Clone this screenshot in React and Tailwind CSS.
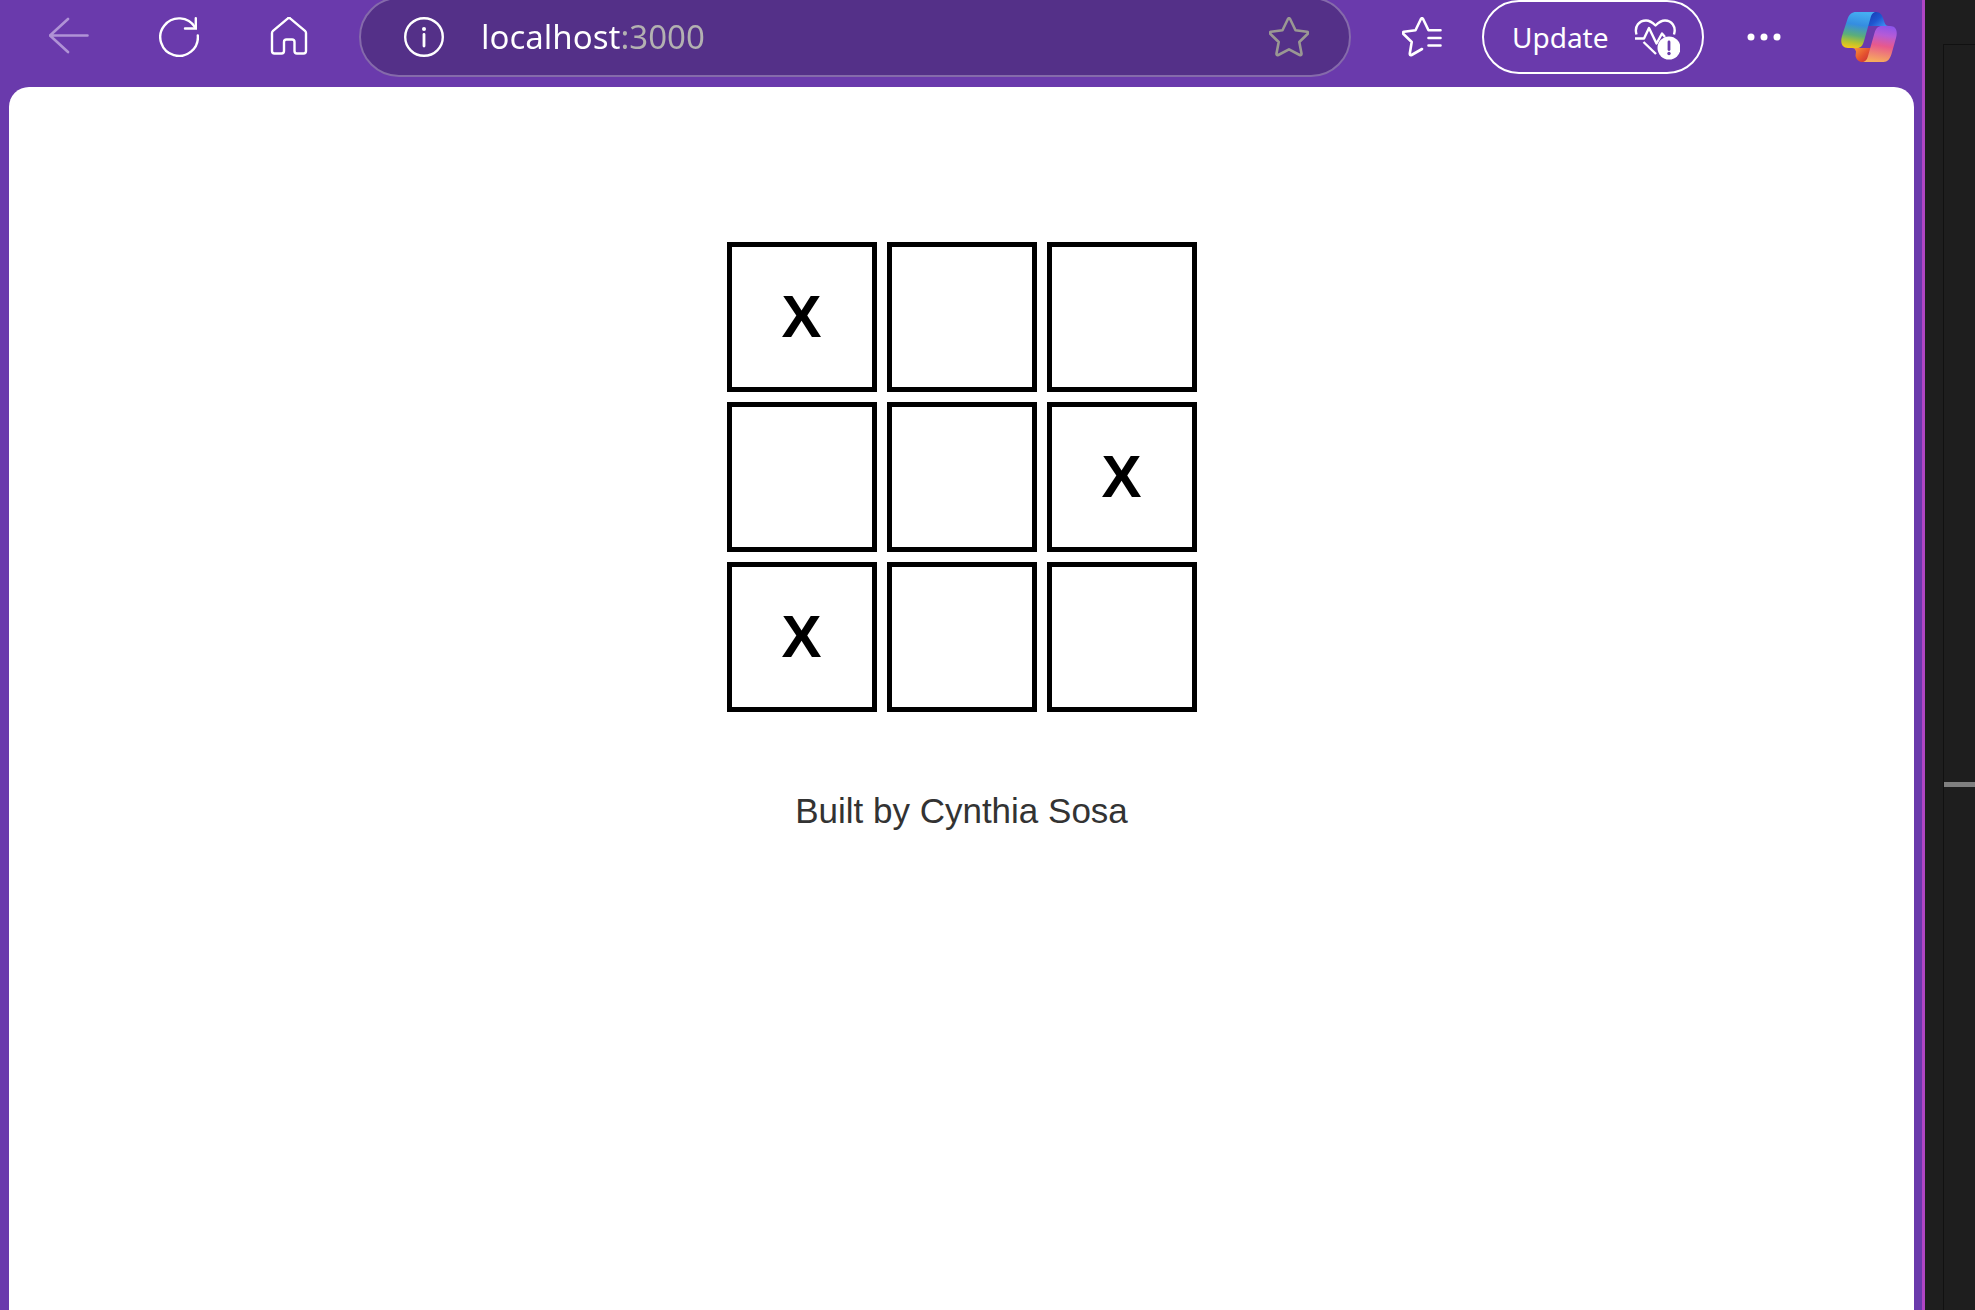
import React, { useState } from "react";

function BackIcon() {
  return (
    <svg width="40" height="40" viewBox="0 0 40 40" fill="none" stroke="currentColor" strokeWidth="2.6" strokeLinecap="round" strokeLinejoin="round">
      <path d="M19 2 1 18.500 19 35M1 18.500H38.500" />
    </svg>
  );
}

function RefreshIcon() {
  return (
    <svg width="40" height="40" viewBox="0 0 40 40" fill="none" stroke="currentColor" strokeWidth="2.4" strokeLinecap="round">
      <path d="M38.800 18.500A18.800 18.800 0 1 1 36.200 10.500" />
      <path d="M36.800 1.200V11.500H26" strokeLinejoin="miter" />
    </svg>
  );
}

function HomeIcon() {
  return (
    <svg width="40" height="40" viewBox="0 0 40 40" fill="none" stroke="currentColor" strokeWidth="2.4" strokeLinejoin="round">
      <path d="M18.6 1.6a2 2 0 0 1 2.8 0L36 13.8q1 .9 1 2.2V34a2.5 2.5 0 0 1-2.5 2.5H28a2.5 2.5 0 0 1-2.5-2.5V25a2.5 2.5 0 0 0-2.500-2.500H17.500A2.500 2.500 0 0 0 15 25v9a2.500 2.500 0 0 1-2.500 2.500H5.500A2.500 2.500 0 0 1 3 34V16q0-1.300 1-2.200Z" />
    </svg>
  );
}

function InfoIcon() {
  return (
    <svg width="40" height="40" viewBox="0 0 40 40" fill="none" stroke="currentColor" strokeWidth="2.4">
      <circle cx="20" cy="20" r="18.800" />
      <path d="M20 17.500V29" strokeWidth="2.800" strokeLinecap="round" />
      <circle cx="20" cy="12" r="2" fill="currentColor" stroke="none" />
    </svg>
  );
}

function StarIcon() {
  return (
    <svg width="40" height="40" viewBox="0 0 40 40" fill="none" stroke="currentColor" strokeWidth="2.600" strokeLinejoin="round">
      <path d="M18.800 2.200q1.200-2 2.400 0L26.500 13.200 38 14.800q2 .500.800 2L30.300 25l2.200 11.500q.2 2.200-1.800 1.500L20 32.300 9.300 38q-2 .7-1.800-1.500L9.700 25 1.200 16.800q-1.200-1.500.8-2L13.500 13.200Z" />
    </svg>
  );
}

function FavoritesIcon() {
  return (
    <svg width="40" height="40" viewBox="0 0 40 40" fill="none" stroke="currentColor" strokeWidth="2.600" strokeLinejoin="round" strokeLinecap="round">
      <path d="M38.500 13.300H26.500L21.200 2.200q-1.200-2-2.400 0L13.500 13.200 2 14.800q-2 .5-.8 2L9.700 25 7.800 36.500q-.2 2.200 1.800 1.500L20 32" />
      <path d="M26.500 21H38.500M26.500 28.500H38.500" />
    </svg>
  );
}

function HeartAlertIcon() {
  return (
    <svg width="46" height="46" viewBox="-1 -4 46 46" fill="none" stroke="currentColor" strokeWidth="2.400" strokeLinejoin="round">
      <path d="M1.500 16.500C-1 8 4.500 2.500 11 2.500c4 0 6.500 2 9.500 5C23.500 4.500 26 2.500 30 2.500c6.500 0 11.500 6 9 14" />
      <path d="M0 20.500h9L14 10l7.500 15.500 5.500-10 3 3.500" />
      <path d="M8.500 24 21 36" />
      <circle cx="34" cy="30" r="11.500" fill="currentColor" stroke="none" />
      <path d="M34 24v7.500" stroke="#6a3aac" strokeWidth="2.800" strokeLinecap="round" />
      <circle cx="34" cy="35.500" r="1.700" fill="#6a3aac" stroke="none" />
    </svg>
  );
}

function DotsIcon() {
  return (
    <svg width="34" height="8" viewBox="0 0 34 8" fill="currentColor">
      <circle cx="4" cy="4" r="3.500" />
      <circle cx="17" cy="4" r="3.500" />
      <circle cx="30" cy="4" r="3.500" />
    </svg>
  );
}

function CopilotIcon() {
  return (
    <svg width="56" height="52" viewBox="0 0 56 52">
      <defs>
        <linearGradient id="cpLeft" gradientUnits="userSpaceOnUse" x1="18" y1="1" x2="12" y2="37">
          <stop offset="0" stopColor="#45aef2" />
          <stop offset="0.350" stopColor="#358de0" />
          <stop offset="0.650" stopColor="#5bae7a" />
          <stop offset="0.850" stopColor="#b5c32f" />
          <stop offset="1" stopColor="#f2c51b" />
        </linearGradient>
        <linearGradient id="cpTop" gradientUnits="userSpaceOnUse" x1="30" y1="2" x2="42" y2="16">
          <stop offset="0" stopColor="#1a3fb8" />
          <stop offset="0.500" stopColor="#1e57d0" />
          <stop offset="1" stopColor="#3c8cf0" />
        </linearGradient>
        <linearGradient id="cpRight" gradientUnits="userSpaceOnUse" x1="43" y1="15" x2="37" y2="51">
          <stop offset="0" stopColor="#8f55ea" />
          <stop offset="0.250" stopColor="#b65bd6" />
          <stop offset="0.550" stopColor="#e8598c" />
          <stop offset="1" stopColor="#f7ac5c" />
        </linearGradient>
        <linearGradient id="cpBottom" gradientUnits="userSpaceOnUse" x1="14" y1="37" x2="26" y2="50">
          <stop offset="0" stopColor="#f79038" />
          <stop offset="0.600" stopColor="#e5532f" />
          <stop offset="1" stopColor="#cf3535" />
        </linearGradient>
      </defs>
      <path d="M30 1h5c4 0 6 3 7 6l1.500 4.500c.8 2.500 2 3.500 4.500 3.500H25Z" fill="url(#cpTop)" />
      <path d="M11 37h19l-4 14h-4.500c-4 0-6-2.500-7-6L15 40.500c-.8-2.500-1.800-3.500-4-3.500Z" fill="url(#cpBottom)" />
      <path d="M15 1h20c-3 0-4.500 2.500-5.500 6L23 30c-1.300 4.500-3 7-7 7H7c-6 0-8-5-6-12L6.500 8C8 3.500 11 1 15 1Z" fill="url(#cpLeft)" />
      <path d="M41 15h8c6 0 8 5 6 12l-4.500 16c-1.500 5-4 8-8 8H21c3.500 0 5-2.500 6-6l6.500-23c1.300-4.500 3.500-7 7.500-7Z" fill="url(#cpRight)" />
    </svg>
  );
}

function ToolbarButton({ label, children, className = "w-[110px]" }) {
  return (
    <button type="button" aria-label={label} className={`flex h-full shrink-0 items-center justify-center ${className}`}>
      {children}
    </button>
  );
}

function AddressBar() {
  const [url, setUrl] = useState("localhost:3000");
  return (
    <div className="ml-[15px] flex h-20 min-w-0 flex-1 items-center rounded-full border-2 border-[#856aab] bg-[#543088] pr-10 pl-[43px]">
      <button type="button" aria-label="Site information" className="shrink-0">
        <InfoIcon />
      </button>
      <input
        type="text"
        aria-label="Address"
        value={url}
        onChange={(e) => setUrl(e.target.value)}
        className="ml-[37px] min-w-0 flex-1 bg-linear-to-r from-white from-[140px] to-[#b3b1b1] to-[140px] bg-clip-text text-[33px] leading-10 text-transparent caret-white outline-none"
      />
      <button type="button" aria-label="Add to favorites" className="shrink-0 text-[#9a9893]">
        <StarIcon />
      </button>
    </div>
  );
}

function Toolbar() {
  return (
    <header className="flex h-[87px] items-center overflow-hidden pr-[3px] pb-[13px] pl-[14px] font-['Noto_Sans','Open_Sans',sans-serif] text-white">
      <ToolbarButton label="Back" className="w-[110px] text-[#b093d6]">
        <BackIcon />
      </ToolbarButton>
      <ToolbarButton label="Refresh">
        <RefreshIcon />
      </ToolbarButton>
      <ToolbarButton label="Home">
        <HomeIcon />
      </ToolbarButton>
      <AddressBar />
      <ToolbarButton label="Favorites" className="ml-4 w-[110px]">
        <FavoritesIcon />
      </ToolbarButton>
      <button type="button" className="ml-[5px] flex h-full w-[222px] shrink-0 items-center justify-between rounded-full border-2 border-white pr-[22px] pl-7 text-[28px] leading-10">
        Update
        <HeartAlertIcon />
      </button>
      <ToolbarButton label="Settings and more" className="ml-[5px] w-[110px]">
        <DotsIcon />
      </ToolbarButton>
      <ToolbarButton label="Copilot" className="w-[100px]">
        <CopilotIcon />
      </ToolbarButton>
    </header>
  );
}

const START = ["X", "", "", "", "", "X", "X", "", ""];

function Board() {
  const [cells, setCells] = useState(START);
  const mark = (i) => setCells(cells.map((c, n) => (n === i && !c ? "X" : c)));
  return (
    <div className="grid grid-cols-3 gap-[10px]">
      {cells.map((value, i) => (
        <button
          key={i}
          type="button"
          aria-label={`Square ${i + 1}`}
          onClick={() => mark(i)}
          className="flex size-[150px] items-center justify-center border-5 border-black text-[60px] leading-none font-bold text-black"
        >
          {value}
        </button>
      ))}
    </div>
  );
}

export default function App() {
  return (
    <div className="flex min-h-screen bg-[#1e1e1e]">
      <div className="flex min-w-0 flex-1 flex-col border-r-3 border-[#b045c4] bg-[#6a3aac]">
        <Toolbar />
        <main className="mr-2 ml-[9px] flex flex-1 flex-col items-center rounded-t-[20px] bg-white pt-[155px] font-['Liberation_Sans',Arial,sans-serif]">
          <Board />
          <p className="mt-[79px] text-[35px] leading-10 text-[#333333]">Built by Cynthia Sosa</p>
        </main>
      </div>
      <aside className="flex w-[50px] shrink-0 flex-col pt-11 pl-[18px]">
        <div className="flex-1 border-t border-l border-[#111111] pt-[737px]">
          <div className="h-[5px] bg-[#808080]" />
        </div>
      </aside>
    </div>
  );
}
